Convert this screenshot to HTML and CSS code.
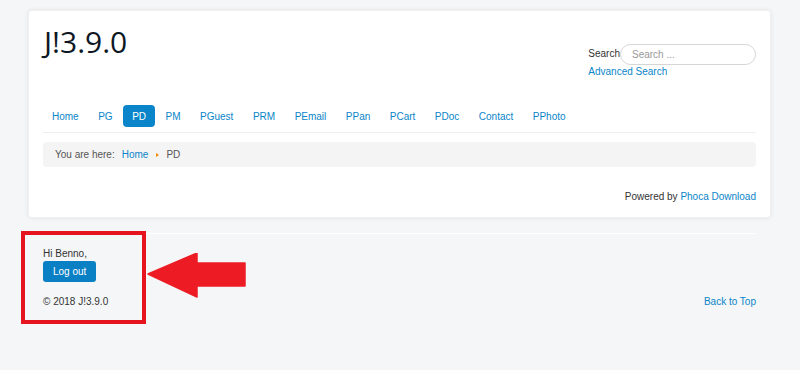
FILE: index.html
```html
<!DOCTYPE html>
<html lang="en">
<head>
  <meta charset="UTF-8" />
  <title>J!3.9.0 - PD</title>
  <link rel="stylesheet" href="styles.css">
</head>
<body>

  <div class="site">

    <!-- main box -->
    <div class="body-box">
      <div class="header">
        <h1 class="brand">J!3.9.0</h1>
        <div class="search">
          <form class="search-row">
            <label for="mod-search">Search</label>
            <input type="text" id="mod-search" placeholder="Search ..." />
          </form>
          <a href="#">Advanced Search</a>
        </div>
      </div>

      <ul class="nav">
        <li><a href="#">Home</a></li>
        <li><a href="#">PG</a></li>
        <li class="active"><a href="#">PD</a></li>
        <li><a href="#">PM</a></li>
        <li><a href="#">PGuest</a></li>
        <li><a href="#">PRM</a></li>
        <li><a href="#">PEmail</a></li>
        <li><a href="#">PPan</a></li>
        <li><a href="#">PCart</a></li>
        <li><a href="#">PDoc</a></li>
        <li><a href="#">Contact</a></li>
        <li><a href="#">PPhoto</a></li>
      </ul>

      <div class="breadcrumb">
        <span class="here">You are here:</span>
        <a href="#">Home</a>
        <span class="divider"></span>
        <span>PD</span>
      </div>

      <div class="powered">Powered by <a href="#">Phoca Download</a></div>
    </div>

    <!-- footer -->
    <div class="footer">
      <hr />
      <div class="greeting">Hi Benno,</div>
      <button class="btn">Log out</button>
      <div class="footer-row">
        <span>&copy; 2018 J!3.9.0</span>
        <a href="#">Back to Top</a>
      </div>
    </div>

  </div>

  <!-- annotation -->
  <div class="mark-box"></div>
  <svg class="mark-arrow" width="100" height="46" viewBox="0 0 100 46">
    <polygon points="1,21 50,0 50,10 98,10 98,33 50,33 50,44" fill="#ed1c24" stroke="#ed1c24" stroke-width="1.5" stroke-linejoin="round" />
  </svg>

</body>
</html>
```

FILE: styles.css
```css
body {
  margin: 0;
  background: #f4f6f7;
  font-family: "Liberation Sans", Arial, sans-serif;
  font-size: 10px;
  line-height: 14px;
  color: #333;
}

a {
  color: #0a85c9;
  text-decoration: none;
}

.site {
  padding: 10px 29px 0 28px;
}

.body-box {
  background: #fff;
  border: 1px solid rgba(0,0,0,0.06);
  border-radius: 4px;
  box-shadow: 0 0 5px rgba(0,0,0,0.08);
  padding: 11px 14px 13px 14px;
}

.header {
  display: flex;
  justify-content: space-between;
  align-items: flex-start;
}

.brand {
  margin: 2px 0 0 1px;
  font-family: "Open Sans", sans-serif;
  font-size: 30px;
  line-height: 36px;
  font-weight: normal;
  color: #0d1724;
}

.search {
  margin-top: 22px;
  display: flex;
  flex-direction: column;
  align-items: flex-start;
}

.search-row {
  display: flex;
  align-items: center;
  margin: 0;
}

.search-row label {
  color: #333;
  margin-top: -2px;
}

.search-row input {
  box-sizing: border-box;
  width: 136px;
  height: 21px;
  border: 1px solid #d6d6d6;
  border-radius: 11px;
  padding: 0 11px;
  font-family: "Liberation Sans", Arial, sans-serif;
  font-size: 10px;
  outline: none;
}

.search-row input::placeholder {
  color: #999;
}

.nav {
  list-style: none;
  margin: 26px 0 0 0;
  padding: 0 0 5px 0;
  border-bottom: 1px solid #eee;
  display: flex;
  gap: 1.5px;
}

.nav a {
  display: block;
  padding: 0 9px;
  height: 22px;
  line-height: 24px;
  border-radius: 4px;
}

.nav .active a {
  background: #0a85c9;
  color: #fff;
}

.breadcrumb {
  margin-top: 9px;
  height: 25px;
  line-height: 25px;
  padding: 0 12px;
  background: #f4f4f4;
  border-radius: 4px;
  color: #555;
  display: flex;
  align-items: center;
}

.breadcrumb .here {
  margin-right: 7px;
}

.breadcrumb .divider {
  width: 0;
  height: 0;
  border-top: 2.5px solid transparent;
  border-bottom: 2.5px solid transparent;
  border-left: 3px solid #f08c00;
  margin: 1px 7px 0 8px;
}

.powered {
  margin-top: 23px;
  text-align: right;
}

.footer {
  margin-top: 15px;
  padding: 0 15px;
}

.footer hr {
  margin: 0;
  border: none;
  border-top: 1px solid #fff;
}

.greeting {
  margin-top: 13px;
}

.btn {
  display: block;
  height: 21px;
  padding: 0 10px;
  border: none;
  border-radius: 3px;
  background: #0a80c4;
  color: #fff;
  font-family: "Liberation Sans", Arial, sans-serif;
  font-size: 10px;
  cursor: pointer;
}

.footer-row {
  margin-top: 13px;
  display: flex;
  justify-content: space-between;
}

.mark-box {
  position: absolute;
  left: 21px;
  top: 231px;
  width: 117px;
  height: 85px;
  border: 4px solid #e5141f;
}

.mark-arrow {
  position: absolute;
  left: 147px;
  top: 253px;
}
```
